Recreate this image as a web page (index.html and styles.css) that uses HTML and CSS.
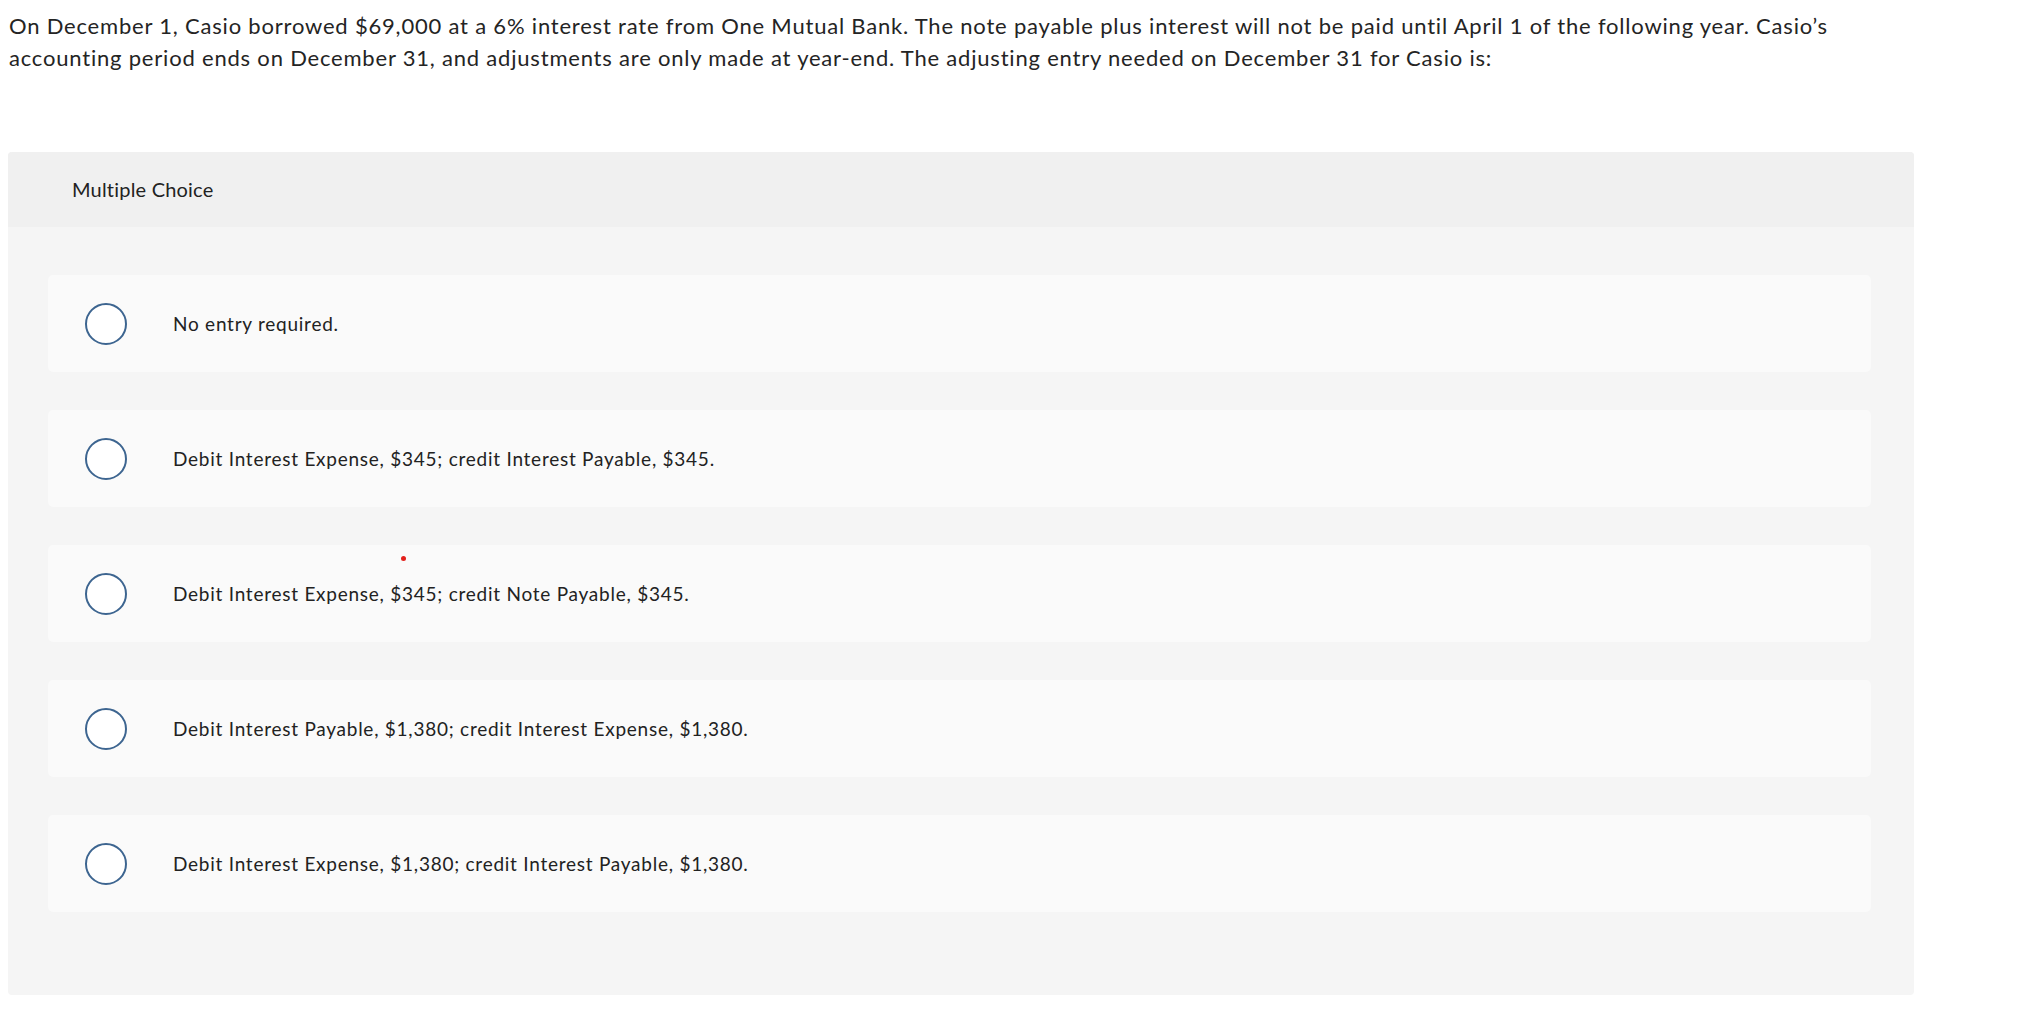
FILE: index.html
```html
<!DOCTYPE html>
<html>
	<head>
		<meta charset="utf-8">
		<title>Multiple Choice</title>
		<link rel="stylesheet" href="styles.css">
	</head>
	<body>
		<div class="question">
			On December 1, Casio borrowed $69,000 at a 6% interest rate from One Mutual Bank. The note payable plus interest will not be paid until April 1 of the following year. Casio’s accounting period ends on December 31, and adjustments are only made at year-end. The adjusting entry needed on December 31 for Casio is:
		</div>

		<div class="panel">
			<div class="panel-head">Multiple Choice</div>
			<div class="choices">
				<label class="choice"><span class="radio"></span><span class="txt">No entry required.</span></label>
				<label class="choice"><span class="radio"></span><span class="txt">Debit Interest Expense, $345; credit Interest Payable, $345.</span></label>
				<label class="choice"><span class="radio"></span><span class="txt">Debit Interest Expense, $345; credit Note Payable, $345.</span></label>
				<label class="choice"><span class="radio"></span><span class="txt">Debit Interest Payable, $1,380; credit Interest Expense, $1,380.</span></label>
				<label class="choice"><span class="radio"></span><span class="txt">Debit Interest Expense, $1,380; credit Interest Payable, $1,380.</span></label>
			</div>
		</div>
		<!--红点 光标残留-->
		<span class="dot"></span>
	</body>
</html>
```

FILE: styles.css
```css
body,html{
	margin: 0;
	background: #fff;
}
body{
	position: relative;
	font-family: Lato, "Open Sans", sans-serif;
	color: #222;
}
.question{
	width: 1860px;
	box-sizing: border-box;
	padding: 10px 0 0 9px;
	font-size: 22px;
	letter-spacing: 0.8px;
	line-height: 32px;
	color: #242424;
}
.panel{
	margin: 78px 0 0 8px;
	width: 1906px;
	background: #f5f5f5;
	border-radius: 4px;
	overflow: hidden;
	padding-bottom: 83px;
}
.panel-head{
	height: 75px;
	box-sizing: border-box;
	padding-left: 64px;
	background: #f0f0f0;
	font-size: 20px;
	letter-spacing: 0.2px;
	line-height: 75px;
}
.choices{
	display: flex;
	flex-direction: column;
	gap: 38px;
	padding: 48px 43px 0 40px;
}
.choice{
	display: flex;
	align-items: center;
	height: 97px;
	box-sizing: border-box;
	padding-left: 37px;
	background: #fafafa;
	border-radius: 5px;
	cursor: pointer;
}
.radio{
	flex: none;
	width: 42px;
	height: 42px;
	box-sizing: border-box;
	border: 2px solid #3d6590;
	border-radius: 50%;
	background: #fff;
}
.txt{
	margin-left: 46px;
	font-size: 19px;
	letter-spacing: 0.75px;
	color: #222;
}
.dot{
	position: absolute;
	left: 401px;
	top: 556px;
	width: 5px;
	height: 5px;
	border-radius: 50%;
	background: #e3201b;
}
```
